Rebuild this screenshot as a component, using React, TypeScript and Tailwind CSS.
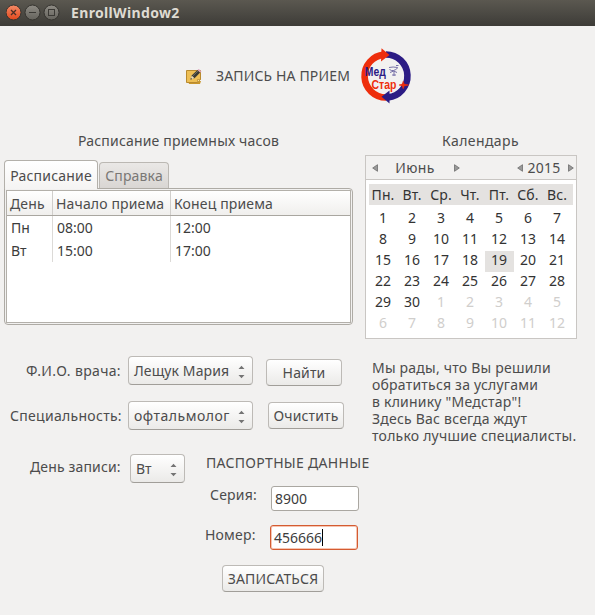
import type { ReactNode } from "react";

function TitleBar() {
  return (
    <header className="flex h-[26px] shrink-0 items-center bg-linear-to-b from-[#5b5850] via-[#4c4a44] to-[#3d3b37] pl-[6px]">
      <svg width="54" height="20" viewBox="0 0 54 20" fill="none">
        <defs>
          <linearGradient id="close" x1="0" y1="0" x2="0" y2="1">
            <stop offset="0" stopColor="#f68b67" />
            <stop offset="1" stopColor="#e0481c" />
          </linearGradient>
          <linearGradient id="plain" x1="0" y1="0" x2="0" y2="1">
            <stop offset="0" stopColor="#8f8c85" />
            <stop offset="1" stopColor="#64625c" />
          </linearGradient>
        </defs>
        <circle cx="7.5" cy="9.5" r="7.5" fill="url(#close)" stroke="#35332f" />
        <circle cx="26.5" cy="9.5" r="7.5" fill="url(#plain)" stroke="#35332f" />
        <circle cx="45.5" cy="9.5" r="7.5" fill="url(#plain)" stroke="#35332f" />
        <path d="M5 7l5 5M10 7l-5 5" stroke="#4a2f26" strokeWidth="1.3" />
        <path d="M23 9.5h7" stroke="#3b3935" />
        <rect x="42.5" y="6.500" width="6" height="6" stroke="#3b3935" />
      </svg>
      <h1 className="mb-px ml-[11px] text-[14px] font-bold tracking-[0.35px] text-[#dfdbd2]">EnrollWindow2</h1>
    </header>
  );
}

function NoteIcon() {
  return (
    <svg width="18" height="18" viewBox="0 0 18 18">
      <path d="M3 14h13l-1 3H4z" fill="#c9962c" />
      <path d="M1.500 3.500h14v9l-3 3h-11z" fill="#eebf55" stroke="#b98a2e" />
      <path d="M15.500 12.500h-3v3z" fill="#fbe3a0" stroke="#b98a2e" strokeWidth=".7" />
      <path d="M5.500 12.500l1.200-4L12.500 3l2.700 2.600-5.700 5.700z" fill="#3a3a34" />
      <path d="M5.500 12.500l1.200-4 2.800 2.800z" fill="#f0dcae" />
      <path d="M5.500 12.500l.5-1.600 1.100 1.100z" fill="#222" />
      <path d="M12.500 3l1.300-1.100 2.700 2.500-1.300 1.200z" fill="#dca0bd" />
      <path d="M8 8.800l5-4.800" stroke="#85857c" strokeWidth=".7" />
    </svg>
  );
}

function Logo() {
  return (
    <svg width="52" height="58" viewBox="360 47 52 58">
      <path d="M386 97.500A21.500 21.500 0 0 1 384 54.600" fill="none" stroke="#ee2e0c" strokeWidth="6.600" />
      <path d="M386 54.500A21.500 21.500 0 0 1 388 97.400" fill="none" stroke="#2c1c84" strokeWidth="6.600" />
      <path d="M381.500 48.300l8 6.700-8.500 6.500z" fill="#ee2e0c" />
      <path d="M389.500 103.600l-8-6.800 8-6.300z" fill="#2c1c84" />
      <text x="364.800" y="75.500" textLength="21" lengthAdjust="spacingAndGlyphs" className="fill-[#2c1c84] font-['Liberation_Sans',sans-serif] text-[13.500px] font-bold">Мед</text>
      <text x="371.500" y="89" textLength="25" lengthAdjust="spacingAndGlyphs" className="fill-[#ee2e0c] font-['Liberation_Sans',sans-serif] text-[13.500px] font-bold">Стар</text>
      <path d="M399 85l3.300-.9.900-2.800.9 2.800 4.400.9-4.400.9-.9 2.800-.9-2.800z" fill="#ee2e0c" stroke="#ee2e0c" strokeWidth=".6" />
      <path d="M389 67.500q4-1 8.500 0M389.500 69.500q4 3 8.500-2M390 72.500q4-3 7 0M392 75h4M394 71v5M396 65.500h2.500" fill="none" stroke="#69639f" strokeWidth=".9" />
    </svg>
  );
}

function Notebook() {
  const rows = [
    ["Пн", "08:00", "12:00"],
    ["Вт", "15:00", "17:00"],
  ];
  return (
    <div className="w-[349px]">
      <div className="flex h-[28px] items-end">
        <div className="z-10 -mb-px flex h-[29px] w-[94px] items-center justify-center rounded-t-[4px] border border-b-0 border-[#b3b0aa] bg-linear-to-b from-white to-[#f5f4f3] text-[#4c4c4c]">
          <span className="tracking-[0.2px]">Расписание</span>
        </div>
        <div className="ml-px flex h-[26px] w-[70px] items-center justify-center rounded-t-[4px] border border-b-0 border-[#bbb8b3] bg-linear-to-b from-[#eae8e6] to-[#d9d6d3] text-[#797775]">
          <span className="tracking-[0.15px]">Справка</span>
        </div>
      </div>
      <div className="h-[137px] rounded-b-[4px] rounded-tr-[4px] border border-[#aeaba5] bg-[#f2f1f0] p-px">
        <div className="h-full border border-[#b3b0aa] bg-white">
          <div className="flex h-[25px] items-center border-b border-[#a9a6a0] bg-linear-to-b from-white to-[#f0efed] tracking-[0.15px] text-[#4c4c4c]">
            <div className="flex h-full w-[46px] items-center border-r border-[#d0cecb] pl-[3px]">День</div>
            <div className="flex h-full w-[118px] items-center border-r border-[#d0cecb] pl-[3px]">Начало приема</div>
            <div className="pl-[3px]">Конец приема</div>
          </div>
          {rows.map((r) => (
            <div key={r[0]} className="flex h-[23px] items-center text-[#3c3c3c]">
              <div className="flex h-full w-[46px] items-center border-r border-[#dcdad7] pl-[4px]">{r[0]}</div>
              <div className="flex h-full w-[118px] items-center border-r border-[#dcdad7] pl-[4px]">{r[1]}</div>
              <div className="pl-[4px]">{r[2]}</div>
            </div>
          ))}
        </div>
      </div>
    </div>
  );
}

function Triangle({ left = false }: { left?: boolean }) {
  return (
    <svg width="6" height="8" viewBox="0 0 6 8" className="shrink-0">
      <path d={left ? "M5.500.7v6.600L.7 4z" : "M.5.7v6.600L5.300 4z"} fill="#999" stroke="#6d6d6d" strokeWidth=".8" />
    </svg>
  );
}

function Calendar() {
  const names = ["Пн.", "Вт.", "Ср.", "Чт.", "Пт.", "Сб.", "Вс."];
  const days = Array.from({ length: 42 }, (_, i) => (i < 30 ? i + 1 : i - 29));
  return (
    <div className="h-[184px] w-[212px] border border-[#c9c6c3] bg-white">
      <div className="flex h-[24px] items-center border-b border-[#c9c6c3] bg-[#f2f1f0] pl-[6px] text-[#4c4c4c]">
        <Triangle left />
        <span className="w-[76px] pr-[2px] text-center tracking-[0.4px]">Июнь</span>
        <Triangle />
        <span className="ml-[57px]"><Triangle left /></span>
        <span className="w-[45px] pr-[3px] text-center tracking-[0.2px]">2015</span>
        <Triangle />
      </div>
      <div className="mt-[4px] ml-[3px] grid h-[21px] w-[204px] grid-cols-[repeat(7,29px)] items-center bg-[#e4e2e0] text-center tracking-[0.1px] text-[#333]">
        {names.map((n) => <span key={n} className="pr-px">{n}</span>)}
      </div>
      <div className="mt-[4px] ml-[3px] grid w-[203px] grid-cols-7 text-center leading-[18px]">
        {days.map((d, i) => (
          <span key={i} className={`h-[21px] pr-px ${i >= 30 ? "text-[#d0cecc]" : "text-[#333]"} ${i === 18 ? "bg-[#e4e2e0]" : ""}`}>{d}</span>
        ))}
      </div>
    </div>
  );
}

function Button({ children, className }: { children: ReactNode; className: string }) {
  return (
    <button className={`flex h-[27px] items-center justify-center rounded-[4px] border border-[#bdbab6] border-b-[#a19e99] bg-linear-to-b from-white to-[#ebeae8] tracking-[0.15px] ${className}`}>
      {children}
    </button>
  );
}

function Combo({ children, className }: { children: ReactNode; className: string }) {
  return (
    <button className={`flex h-[29px] items-center justify-between rounded-[4px] border border-[#bdbab6] border-b-[#a19e99] bg-linear-to-b from-white to-[#ebeae8] pr-[7px] pl-[5px] ${className}`}>
      {children}
      <svg width="7" height="14" viewBox="0 0 7 14" className="mt-[2px] shrink-0" fill="#747474">
        <path d="M.5 4L3.500.8 6.500 4zM.5 10l3 3.200 3-3.200z" />
      </svg>
    </button>
  );
}

export default function App() {
  return (
    <div className="flex h-[615px] w-[595px] flex-col overflow-hidden bg-[#f2f1f0] font-['Noto_Sans',sans-serif] text-[14px] leading-[17px] whitespace-nowrap text-[#4c4c4c]">
      <TitleBar />
      <div className="mt-[21px] flex h-[58px] items-center pl-[185px]">
        <NoteIcon />
        <h2 className="mb-[2px] ml-[13px] w-[144px] tracking-[0.15px]">ЗАПИСЬ НА ПРИЕМ</h2>
        <Logo />
      </div>
      <main className="flex">
        <section className="w-[365px] pt-[27px] pl-[4px]">
          <h3 className="mb-[11px] ml-[74px] tracking-[0.18px]">Расписание приемных часов</h3>
          <Notebook />
        </section>
        <section className="pt-[27px]">
          <h3 className="mb-[6px] pl-[77px] tracking-[0.4px]">Календарь</h3>
          <Calendar />
        </section>
      </main>
      <div className="mt-[17px] flex">
        <form className="w-[372px]">
          <div className="flex">
            <label className="mt-[6px] w-[128px] pl-[26px] tracking-[0.35px]">Ф.И.О. врача:</label>
            <Combo className="w-[125px] tracking-[0.1px]">Лещук Мария</Combo>
            <Button className="mt-[3px] ml-[13px] w-[76px]">Найти</Button>
          </div>
          <div className="mt-[15px] flex">
            <label className="mt-[6px] w-[128px] pl-[10px] tracking-[0.3px]">Специальность:</label>
            <Combo className="w-[125px] tracking-[0.5px]">офтальмолог</Combo>
            <Button className="mt-[1px] ml-[15px] w-[76px]">Очистить</Button>
          </div>
          <div className="mt-[24px] flex">
            <label className="mt-[4px] w-[130px] pl-[30px] tracking-[0.15px]">День записи:</label>
            <Combo className="w-[55px]">Вт</Combo>
            <span className="ml-[21px] tracking-[0.3px]">ПАСПОРТНЫЕ ДАННЫЕ</span>
          </div>
          <div className="mt-[3px] flex h-[25px]">
            <label className="w-[271px] pl-[210px] tracking-[0.2px]">Серия:</label>
            <input className="h-[25px] w-[88px] rounded-[3px] border border-[#aaa7a1] bg-white px-[3px] text-[#3c3c3c]" defaultValue="8900" />
          </div>
          <div className="mt-[14px] flex h-[25px]">
            <label className="mt-px w-[270px] pl-[205px] tracking-[0.2px]">Номер:</label>
            <div className="flex h-[25px] w-[88px] items-center rounded-[3px] border border-[#d45b31] bg-white pl-[3px] text-[#3c3c3c] ring-1 ring-[#f6c5b2] ring-inset">
              456666<span className="h-[17px] w-px bg-black" />
            </div>
          </div>
          <Button className="mt-[15px] ml-[222px] w-[102px]">ЗАПИСАТЬСЯ</Button>
        </form>
        <p className="mt-[3px] tracking-[0.22px]">
          Мы рады, что Вы решили<br />обратиться за услугами<br />в клинику "Медстар"!<br />Здесь Вас всегда ждут<br />только лучшие специалисты.
        </p>
      </div>
    </div>
  );
}
